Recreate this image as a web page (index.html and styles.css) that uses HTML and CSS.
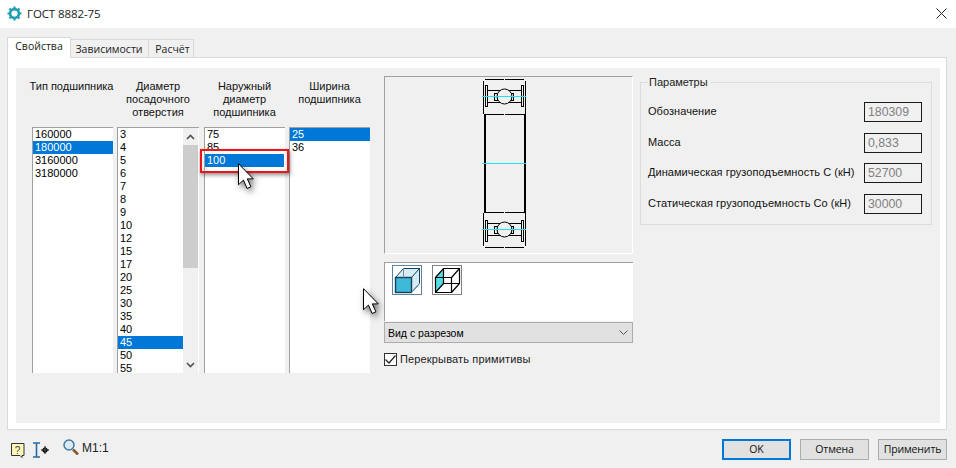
FILE: index.html
```html
<!DOCTYPE html>
<html>
<head>
  <title>ГОСТ 8882-75</title>
  <meta charset="UTF-8">
  <link rel="stylesheet" href="styles.css">
</head>
<body>
  <div class="dialog">
    <div class="title-bar">
      <svg class="title-icon" width="15" height="15" viewBox="0 0 15 15">
        <circle cx="7.5" cy="7.5" r="4.4" fill="none" stroke="#1f9fb3" stroke-width="2.6"/>
        <path d="M7.5 0.5v2.5M7.5 12v2.5M0.5 7.5h2.5M12 7.5h2.5M2.5 2.5l1.8 1.8M10.7 10.7l1.8 1.8M12.5 2.5l-1.8 1.8M4.3 10.7l-1.8 1.8" stroke="#1f9fb3" stroke-width="2.2"/>
      </svg>
      <span class="title-text">ГОСТ 8882-75</span>
      <svg class="close-icon" width="11" height="11" viewBox="0 0 11 11">
        <path d="M0.5 0.5l10 10M10.5 0.5l-10 10" stroke="#222" stroke-width="1"/>
      </svg>
    </div>

    <div class="tabs">
      <div class="tab tab-active">Свойства</div>
      <div class="tab tab-deps">Зависимости</div>
      <div class="tab tab-calc">Расчёт</div>
    </div>

    <div class="tab-page">
      <div class="inner">
        <div class="bearing-lists">
          <div class="bearing-col">
            <div class="col-title col-title-line">Тип подшипника</div>
            <div class="list">
              <div class="row">160000</div>
              <div class="row selected">180000</div>
              <div class="row">3160000</div>
              <div class="row">3180000</div>
            </div>
          </div>
          <div class="bearing-col col-wide">
            <div class="col-title">Диаметр посадочного отверстия</div>
            <div class="list list-scroll">
              <div class="rows">
                <div class="row">3</div>
                <div class="row">4</div>
                <div class="row">5</div>
                <div class="row">6</div>
                <div class="row">7</div>
                <div class="row">8</div>
                <div class="row">9</div>
                <div class="row">10</div>
                <div class="row">12</div>
                <div class="row">15</div>
                <div class="row">17</div>
                <div class="row">20</div>
                <div class="row">25</div>
                <div class="row">30</div>
                <div class="row">35</div>
                <div class="row">40</div>
                <div class="row selected">45</div>
                <div class="row">50</div>
                <div class="row">55</div>
              </div>
              <div class="scrollbar">
                <div class="scroll-btn">
                  <svg width="9" height="6" viewBox="0 0 9 6"><path d="M1 5l3.5-3.5L8 5" fill="none" stroke="#505050" stroke-width="1.6"/></svg>
                </div>
                <div class="scroll-thumb"></div>
                <div class="scroll-track"></div>
                <div class="scroll-btn">
                  <svg width="9" height="6" viewBox="0 0 9 6"><path d="M1 1l3.5 3.5L8 1" fill="none" stroke="#505050" stroke-width="1.6"/></svg>
                </div>
              </div>
            </div>
          </div>
          <div class="bearing-col">
            <div class="col-title">Наружный диаметр подшипника</div>
            <div class="list">
              <div class="row">75</div>
              <div class="row">85</div>
              <div class="row selected row-inset">100</div>
            </div>
          </div>
          <div class="bearing-col col-last">
            <div class="col-title">Ширина подшипника</div>
            <div class="list">
              <div class="row selected">25</div>
              <div class="row">36</div>
            </div>
          </div>
        </div>

        <div class="view-col">
          <div class="preview">
            <svg class="bearing" width="247" height="177" viewBox="385 77 247 177" shape-rendering="crispEdges">
              <g fill="none" stroke="#000" stroke-width="1">
                <path d="M485 79.5h39M483.5 81v33M525.5 81v33"/>
                <path d="M483.5 114.5h42M483.5 212.5h42"/>
                <path d="M485 247.5h39M483.5 213v33M525.5 213v33"/>
                <path d="M485.5 85.5h2v21h-2zM521.5 85.5h2v21h-2z"/>
                <path d="M488 90.5h33M488 102.5h33"/>
                <path d="M494.5 93.5h3v7h-3zM511.5 93.5h2v7h-2z"/>
                <circle cx="504.5" cy="96.5" r="7.5" fill="#f0f0f0" shape-rendering="auto"/>
                <path d="M485.5 220.5h2v21h-2zM521.5 220.5h2v21h-2z"/>
                <path d="M488 223.5h33M488 235.5h33"/>
                <path d="M494.5 226.5h3v7h-3zM511.5 226.5h2v7h-2z"/>
                <circle cx="504.5" cy="229.5" r="7.5" fill="#f0f0f0" shape-rendering="auto"/>
              </g>
              <rect x="484" y="114" width="2" height="99" fill="#000"/>
              <rect x="524" y="114" width="2" height="99" fill="#000"/>
              <path d="M482 96.5h44M482 163.5h44M482 229.5h44" stroke="#19e6f0" stroke-width="1"/>
              <path d="M504.5 79v1M504.5 114v1M504.5 212v1M504.5 247v1" stroke="#f0f0f0" stroke-width="1"/>
            </svg>
          </div>
          <div class="view-buttons">
            <div class="cube-btn cube-btn-on">
              <svg width="28" height="28" viewBox="0 0 28 28">
                <path d="M3 12l8-9h16v16l-8 7H3z" fill="#d6ecf5"/>
                <rect x="2.5" y="11.5" width="16" height="15" fill="#3fb9d8" stroke="#14405a" stroke-width="1.4"/>
                <path d="M2.5 11.5l8-9h16v15l-8 9M18.5 11.5l8-9" fill="none" stroke="#14405a" stroke-width="1"/>
                <path d="M10.5 2.5v9M18.5 26.500l8-9" fill="none" stroke="#6e93ab" stroke-width="1"/>
              </svg>
            </div>
            <div class="cube-btn">
              <svg width="28" height="28" viewBox="0 0 28 28">
                <path d="M2.5 11.5l8-9v15l-8 9z" fill="#55dde6"/>
                <path d="M2.5 11.5h16v15h-16zM2.5 11.5l8-9h16v15l-8 9M18.5 11.5l8-9M10.5 2.5v15h16M10.5 17.5l-8 9" fill="none" stroke="#000" stroke-width="1.2"/>
              </svg>
            </div>
          </div>
          <div class="view-select">
            <span>Вид с разрезом</span>
            <svg width="9" height="5" viewBox="0 0 9 5"><path d="M0.5 0.5l4 4 4-4" fill="none" stroke="#555" stroke-width="1"/></svg>
          </div>
          <label class="overlap-check">
            <span class="check-box">
              <svg width="11" height="9" viewBox="0 0 11 9"><path d="M0.5 4.5l3.5 3.5 6.5-7.5" fill="none" stroke="#222" stroke-width="1.2"/></svg>
            </span>
            <span class="check-label">Перекрывать примитивы</span>
          </label>
        </div>

        <fieldset class="params">
          <legend>Параметры</legend>
          <div class="param-row"><span class="param-label">Обозначение</span><input class="param-value" value="180309" readonly></div>
          <div class="param-row"><span class="param-label">Масса</span><input class="param-value" value="0,833" readonly></div>
          <div class="param-row"><span class="param-label">Динамическая грузоподъемность С (кН)</span><input class="param-value" value="52700" readonly></div>
          <div class="param-row"><span class="param-label">Статическая грузоподъемность Со (кН)</span><input class="param-value" value="30000" readonly></div>
        </fieldset>
      </div>
    </div>

    <div class="footer">
      <svg class="help-icon" width="14" height="15" viewBox="0 0 14 15">
        <path d="M0.5 0.5h12.5v12h-2v2l-2-2h-8.5z" fill="#fdf6b8" stroke="#333" stroke-width="1"/>
        <text x="6.5" y="10.5" class="help-mark">?</text>
      </svg>
      <svg class="ibeam-icon" width="17" height="16" viewBox="0 0 17 16">
        <path d="M0 1h7M0 15h7M3.5 1v14" fill="none" stroke="#2a6aa0" stroke-width="1.6"/>
        <circle cx="12" cy="8" r="2" fill="none" stroke="#000" stroke-width="1.2"/>
        <path d="M12 4v8M8 8h8" stroke="#000" stroke-width="1"/>
      </svg>
      <svg class="zoom-icon" width="16" height="16" viewBox="0 0 16 16">
        <path d="M10 10.5l5 5" stroke="#8a5a2b" stroke-width="2.6"/>
        <circle cx="6" cy="6" r="5" fill="#dbe9f3" stroke="#3f7aa3" stroke-width="1.5"/>
      </svg>
      <span class="scale-text">М1:1</span>
      <div class="footer-buttons">
        <div class="btn btn-default">OK</div>
        <div class="btn">Отмена</div>
        <div class="btn">Применить</div>
      </div>
    </div>

    <div class="hilite"></div>
    <svg class="cursor cursor-list" width="16" height="27" viewBox="0 0 16 27">
      <path d="M0.5 0.7v21l5-4.600 3.600 8.400 3.800-1.700-3.600-7.900h6z" fill="#fff" stroke="#000" stroke-width="1"/>
    </svg>
    <svg class="cursor cursor-free" width="16" height="27" viewBox="0 0 16 27">
      <path d="M0.5 0.7v21l5-4.600 3.600 8.400 3.800-1.700-3.600-7.900h6z" fill="#fff" stroke="#000" stroke-width="1"/>
    </svg>
  </div>
</body>
</html>
```

FILE: styles.css
```css
html, body {
  margin: 0;
  padding: 0;
}

body {
  font-family: "Liberation Sans", Arial, sans-serif;
  font-size: 11px;
  color: #000;
}

.dialog {
  position: relative;
  width: 956px;
  height: 468px;
  overflow: hidden;
  background-color: #f0f0f0;
}

.title-bar {
  display: flex;
  align-items: center;
  height: 28px;
  padding: 0 9px 2px 7px;
  box-sizing: border-box;
  background-color: #fff;
}

.title-text {
  margin-left: 5px;
  font-family: "Open Sans", sans-serif;
  font-size: 11.5px;
  letter-spacing: -0.1px;
  color: #1a1a1a;
}

.close-icon {
  margin-left: auto;
}

.tabs {
  display: flex;
  align-items: flex-end;
  height: 30px;
  padding-left: 7px;
  box-sizing: border-box;
  margin-bottom: -1px;
  position: relative;
}

.tab {
  height: 19px;
  line-height: 19px;
  text-align: center;
  font-family: "Open Sans", sans-serif;
  font-size: 10.5px;
  box-sizing: border-box;
  border: 1px solid #d9d9d9;
  border-left: none;
  color: #222;
}

.tab-active {
  width: 64px;
  height: 21px;
  line-height: 17px;
  background-color: #fff;
  border-left: 1px solid #d9d9d9;
  border-bottom: none;
}

.tab-deps {
  width: 78px;
  padding-right: 1px;
}

.tab-calc {
  width: 45px;
  padding-left: 3px;
}

.tab-page {
  margin: 0 9px 0 7px;
  padding: 10px 6px 7px 8px;
  height: 373px;
  box-sizing: border-box;
  background-color: #fff;
  border: 1px solid #d9d9d9;
}

.inner {
  display: flex;
  height: 355px;
  padding: 8px 8px 0 16px;
  box-sizing: border-box;
  background-color: #f0f0f0;
}

.bearing-lists {
  display: flex;
  width: 338px;
  margin-top: 4px;
}

.bearing-col {
  width: 81px;
  margin-right: 4px;
}

.col-wide {
  width: 82px;
  margin-right: 5px;
}

.col-last {
  margin-right: 0;
}

.col-title {
  height: 47px;
  line-height: 13px;
  text-align: center;
  color: #111;
}

.col-title-line {
  margin: 0 -1px 0 -3px;
  white-space: nowrap;
}

.list {
  height: 246px;
  overflow: hidden;
  box-sizing: border-box;
  background-color: #fff;
  border-top: 1px solid #a0a0a0;
  border-left: 1px solid #a0a0a0;
}

.list-scroll {
  display: flex;
}

.rows {
  flex: 1;
}

.row {
  height: 13px;
  line-height: 13px;
  padding-left: 2px;
}

.selected {
  background-color: #0078d7;
  color: #fff;
}

.row-inset {
  margin-right: 1px;
}

.scrollbar {
  display: flex;
  flex-direction: column;
  width: 15px;
  margin-right: 1px;
  background-color: #f0f0f0;
}

.scroll-btn {
  display: flex;
  align-items: center;
  justify-content: center;
  height: 17px;
}

.scroll-thumb {
  height: 123px;
  background-color: #cdcdcd;
}

.scroll-track {
  flex: 1;
}

.view-col {
  width: 249px;
  margin-left: 14px;
}

.preview {
  height: 178px;
  box-sizing: border-box;
  border-top: 1px solid #a0a0a0;
  border-left: 1px solid #a0a0a0;
  border-right: 1px solid #fff;
  border-bottom: 1px solid #fff;
}

.bearing {
  display: block;
}

.view-buttons {
  display: flex;
  gap: 10px;
  height: 59px;
  margin-top: 8px;
  padding: 2px 0 0 7px;
  box-sizing: border-box;
  background-color: #fff;
  border-top: 1px solid #a0a0a0;
  border-left: 1px solid #a0a0a0;
}

.cube-btn {
  display: flex;
  align-items: center;
  justify-content: center;
  width: 30px;
  height: 30px;
  box-sizing: border-box;
  border: 1px solid #808080;
}

.cube-btn-on {
  border-color: #5b84a3;
}

.view-select {
  display: flex;
  align-items: center;
  justify-content: space-between;
  height: 21px;
  margin-top: 1px;
  padding: 0 4px 0 3px;
  box-sizing: border-box;
  font-size: 10.5px;
  background-color: #e1e1e1;
  border: 1px solid #adadad;
}

.overlap-check {
  display: flex;
  align-items: center;
  gap: 3px;
  margin-top: 10px;
  color: #222;
}

.check-box {
  display: flex;
  align-items: center;
  justify-content: center;
  width: 13px;
  height: 13px;
  box-sizing: border-box;
  border: 1px solid #333;
  background-color: #fff;
}

.check-label {
  margin-top: -1px;
  letter-spacing: 0.15px;
}

.params {
  display: flex;
  flex-direction: column;
  gap: 10.67px;
  width: 292px;
  height: 149px;
  margin: 0 0 0 7px;
  padding: 13px 9px 10px 7px;
  box-sizing: border-box;
  border: 1px solid #dcdcdc;
}

.params legend {
  padding: 0 3px 0 1px;
  margin-left: 0;
  line-height: 13px;
  color: #222;
}

.param-row {
  display: flex;
  align-items: center;
  justify-content: space-between;
  height: 20px;
  color: #111;
}

.param-label {
  margin-top: -2px;
  letter-spacing: 0.05px;
}

.param-value {
  width: 58px;
  height: 20px;
  padding: 0 3px;
  box-sizing: border-box;
  border: 1px solid #1a1a1a;
  border-radius: 0;
  outline: none;
  background-color: #f0f0f0;
  font-family: "Liberation Sans", Arial, sans-serif;
  font-size: 12.3px;
  color: #808080;
}

.footer {
  display: flex;
  align-items: flex-start;
  height: 38px;
  padding: 9px 9px 0 11px;
  box-sizing: border-box;
}

.help-icon {
  margin-top: 4px;
}

.help-mark {
  font-size: 10px;
  text-anchor: middle;
  fill: #444;
}

.ibeam-icon {
  margin: 3px 0 0 8px;
}

.zoom-icon {
  margin: 0 0 0 13px;
}

.scale-text {
  margin: 2px 0 0 3px;
  font-size: 12px;
  color: #222;
}

.footer-buttons {
  display: flex;
  gap: 9px;
  margin-left: auto;
}

.btn {
  width: 69px;
  height: 21px;
  line-height: 19px;
  text-align: center;
  box-sizing: border-box;
  font-family: "Open Sans", sans-serif;
  font-size: 10.5px;
  letter-spacing: -0.15px;
  background-color: #e1e1e1;
  border: 1px solid #adadad;
  color: #111;
}

.btn-default {
  line-height: 17px;
  border: 2px solid #0078d7;
}

/* stuff drawn over the form */
.hilite {
  position: absolute;
  left: 200px;
  top: 149px;
  width: 89px;
  height: 24px;
  box-sizing: border-box;
  border: 2px solid #f01414;
  box-shadow: 1px 2px 4px rgba(0, 0, 0, 0.45);
}

.cursor {
  position: absolute;
  filter: drop-shadow(2px 3px 3px rgba(0, 0, 0, 0.55));
}

.cursor-list {
  left: 238px;
  top: 163px;
}

.cursor-free {
  left: 363px;
  top: 288px;
}
```
